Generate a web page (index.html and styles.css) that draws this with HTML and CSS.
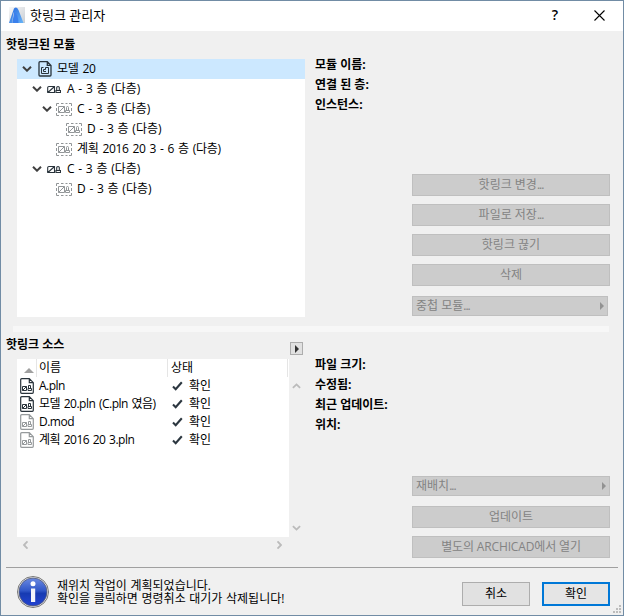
FILE: index.html
```html
<!DOCTYPE html>
<html lang="ko">
<head>
<meta charset="utf-8">
<title>핫링크 관리자</title>
<link rel="stylesheet" href="styles.css">
</head>
<body>
<svg class="defs" width="0" height="0">
  <defs>
    <linearGradient id="logoBlue" x1="0" x2="1" y1="0" y2="1"><stop offset="0" stop-color="#2367df"/><stop offset="1" stop-color="#69b5f7"/></linearGradient>
    <linearGradient id="logoBg" x1="0" x2="1" y1="0" y2="1"><stop offset="0" stop-color="#f8f8f8"/><stop offset="1" stop-color="#c9ced4"/></linearGradient>
    <linearGradient id="infoBlue" x1="0" x2="0" y1="0" y2="1"><stop offset="0" stop-color="#6b8ae2"/><stop offset=".45" stop-color="#3157c8"/><stop offset=".55" stop-color="#173bb2"/><stop offset="1" stop-color="#2343d2"/></linearGradient>
    <symbol id="chevron" viewBox="0 0 10 6"><path d="M1 .8 5 4.700 9 .8" fill="none" stroke="currentColor" stroke-width="2"/></symbol>
    <symbol id="plan" viewBox="0 0 14 16"><path d="M2 .7h7.300l3.700 3.700V14q0 1-1 1H2q-1 0-1-1V1.700q0-1 1-1zM9.300.7v3.700H13" fill="none" stroke="currentColor" stroke-width="1.300"/><path d="M5.500 6.500h-2v6h7v-6h-3M7.500 6.500v2h-2v2H8" fill="none" stroke="currentColor"/></symbol>
    <symbol id="file" viewBox="0 0 14 16"><path d="M1.700.7h7.600l4 4v9.600q0 1-1 1H1.700q-1 0-1-1V1.700q0-1 1-1zM9.300.7v4h4" fill="none" stroke="currentColor" stroke-width="1.200"/><path d="M2.500 8.500h4v4h-4zM2.500 12.500l4-4M8.500 10.500v-3h2v3M8 10.500h3.500v2H8z" fill="none" stroke="currentColor"/></symbol>
    <symbol id="module" viewBox="0 0 14 9"><path d="M1.300 1.500h6.200v6H.7V2.500q0-1 1-1M.9 7.500l6.600-6M9 7.500h4.500v-2H9zM9.700 5.500v-3q0-1 1.300-1t1.300 1v3" fill="none" stroke="currentColor" stroke-width="1.100"/></symbol>
    <symbol id="nested" viewBox="0 0 16 13"><path d="M.5 3V.5H3M5 .5h2.500m2 0h2M13 .5h2.500V3m0 2v3m0 2v2.500H13m-1.500 0h-2m-2 0H5m-2 0H.5V10m0-2V5" fill="none" stroke="currentColor"/><path d="M2.500 3.500h6v6h-6zM2.500 9.500l6-6M9.500 9.500h4v-2h-4zM10.500 7.500v-3q0-1 1-1t1 1v3" fill="none" stroke="currentColor"/></symbol>
    <symbol id="check" viewBox="0 0 11 10"><path d="M1 5.500l2.700 2.700L9.800 1.300" fill="none" stroke="#2c3740" stroke-width="2.100"/></symbol>
  </defs>
</svg>
<div class="dialog">
  <header class="titlebar">
    <svg class="logo" viewBox="0 0 16 16"><path d="M0 0h16v16H0z" fill="url(#logoBg)"/><path d="M0 16 5 1.500Q6 .4 7 .4q1.600 0 2.500 2.600L14.500 16H9Q8 6 5 5 3.500 8 3.500 16z" fill="url(#logoBlue)"/><path d="M5 4.500Q9 6 9.500 16H3.500z" fill="#3b80ec"/></svg>
    <h1>핫링크 관리자</h1>
    <span class="help">?</span>
    <svg class="close" viewBox="0 0 11 11"><path d="M.5.5l10 10M10.500.5l-10 10" stroke="#000" stroke-width="1.100"/></svg>
  </header>

  <section class="panel modules">
    <div class="left">
      <div class="heading"><h2>핫링크된 모듈</h2></div>
      <ul class="tree">
        <li class="selected"><svg class="chev"><use href="#chevron"/></svg><svg class="i-plan"><use href="#plan"/></svg><span class="num">모델 20</span></li>
        <li class="l1"><svg class="chev"><use href="#chevron"/></svg><svg class="i-mod"><use href="#module"/></svg><span>A - 3 층 (다층)</span></li>
        <li class="l2"><svg class="chev"><use href="#chevron"/></svg><svg class="i-nest"><use href="#nested"/></svg><span>C - 3 층 (다층)</span></li>
        <li class="l3"><i class="chev"></i><svg class="i-nest"><use href="#nested"/></svg><span>D - 3 층 (다층)</span></li>
        <li class="l2"><i class="chev"></i><svg class="i-nest"><use href="#nested"/></svg><span class="num">계획 2016 20 3 - 6 층 (다층)</span></li>
        <li class="l1"><svg class="chev"><use href="#chevron"/></svg><svg class="i-mod"><use href="#module"/></svg><span>C - 3 층 (다층)</span></li>
        <li class="l2"><i class="chev"></i><svg class="i-nest"><use href="#nested"/></svg><span>D - 3 층 (다층)</span></li>
      </ul>
    </div>
    <div class="right">
      <dl><dt>모듈 이름:</dt><dt>연결 된 층:</dt><dt>인스턴스:</dt></dl>
      <div class="actions">
        <button disabled>핫링크 변경<span class="dots">...</span></button>
        <button disabled>파일로 저장<span class="dots">...</span></button>
        <button disabled>핫링크 끊기</button>
        <button disabled>삭제</button>
        <button disabled class="popup narrow"><span>중첩 모듈<span class="dots">...</span></span><i class="arrow"></i></button>
      </div>
    </div>
  </section>

  <div class="splitter"></div>

  <section class="panel sources">
    <div class="left">
      <div class="heading"><h2>핫링크 소스</h2><button class="expand"><i class="arrow"></i></button></div>
      <div class="listwrap">
        <div class="list">
          <div class="row head"><span class="sort"><i></i></span><span class="name">이름</span><span class="state">상태</span></div>
          <div class="row"><svg class="file"><use href="#file"/></svg><span class="name">A.pln</span><svg class="check"><use href="#check"/></svg><span>확인</span></div>
          <div class="row"><svg class="file"><use href="#file"/></svg><span class="name">모델 20.pln (C.pln 였음)</span><svg class="check"><use href="#check"/></svg><span>확인</span></div>
          <div class="row"><svg class="file dim"><use href="#file"/></svg><span class="name">D.mod</span><svg class="check"><use href="#check"/></svg><span>확인</span></div>
          <div class="row"><svg class="file dim"><use href="#file"/></svg><span class="name">계획 2016 20 3.pln</span><svg class="check"><use href="#check"/></svg><span>확인</span></div>
        </div>
        <div class="vscroll"><svg class="sc up"><use href="#chevron"/></svg><svg class="sc"><use href="#chevron"/></svg></div>
        <div class="hscroll"><svg class="sc west"><use href="#chevron"/></svg><svg class="sc east"><use href="#chevron"/></svg></div>
      </div>
    </div>
    <div class="right">
      <dl><dt>파일 크기:</dt><dt>수정됨:</dt><dt>최근 업데이트:</dt><dt>위치:</dt></dl>
      <div class="actions">
        <button disabled class="popup"><span>재배치<span class="dots">...</span></span><i class="arrow"></i></button>
        <button disabled>업데이트</button>
        <button disabled class="open">별도의 ARCHICAD에서 열기</button>
      </div>
    </div>
  </section>

  <footer>
    <svg class="info" viewBox="0 0 32 32"><circle cx="16" cy="16" r="15.500" fill="#eee" stroke="#777"/><circle cx="16" cy="16" r="14" fill="url(#infoBlue)" stroke="#555c77" stroke-width=".8"/><circle cx="16" cy="7.800" r="2.500" fill="#fff"/><path d="M14 12.500h4.200V26H14z" fill="#f3f5fa"/></svg>
    <div class="message"><p>재위치 작업이 계획되었습니다.</p><p>확인을 클릭하면 명령취소 대기가 삭제됩니다!</p></div>
    <button class="cancel">취소</button>
    <button class="ok">확인</button>
    <svg class="grip" viewBox="0 0 8 8"><path d="M6 0h2v2H6zM3 3h2v2H3zM6 3h2v2H6zM0 6h2v2H0zM3 6h2v2H3zM6 6h2v2H6z" fill="#bcbcbc"/></svg>
  </footer>
</div>
</body>
</html>
```
FILE: styles.css
```css
* { box-sizing: border-box; }
body, h1, h2, ul, dl, p { margin: 0; padding: 0; }
body {
  font: 12px/20px "Open Sans", "Noto Sans CJK KR", sans-serif;
  color: #000;
}
svg { display: block; flex: none; }
.defs { position: absolute; }
h1, h2 { font-size: inherit; }
button { font: inherit; color: inherit; padding: 0; border-radius: 0; }
.dialog {
  width: 624px;
  height: 616px;
  border: 1px solid #718ca5;
  background: #f0f0f0;
  display: flex;
  flex-direction: column;
  white-space: nowrap;
}
.titlebar {
  height: 30px;
  flex: none;
  background: #fff;
  display: flex;
  align-items: center;
  padding: 0 18px 2px 8px;
}
.logo { width: 16px; height: 16px; }
h1 { flex: 1; margin-left: 5px; font-size: 13px; font-weight: 400; }
.help { font-size: 14px; font-weight: 600; margin-right: 36px; }
.close { width: 11px; height: 11px; }

.panel { display: flex; padding-left: 5px; flex: none; }
.left { width: 309px; }
.right { flex: 1; display: flex; flex-direction: column; }
.modules { height: 295px; }
.heading { height: 28px; display: flex; padding-top: 4px; }
h2, dt { font-weight: 700; font-size: 12px; }
.tree {
  list-style: none;
  width: 288px;
  height: 258px;
  margin-left: 11px;
  background: #fff;
}
.tree li { height: 20px; display: flex; align-items: center; padding-left: 5px; }
.tree span { word-spacing: .6px; }
.tree .num { letter-spacing: -.3px; word-spacing: 1.1px; }
.tree .selected { background: #cce8ff; }
.tree .l1 { padding-left: 15px; }
.tree .l2 { padding-left: 25px; }
.tree .l3 { padding-left: 35px; }
.chev { width: 10px; height: 6px; color: #404040; }
.i-plan { width: 14px; height: 16px; margin: 0 5px 0 6px; color: #29333b; }
.i-mod { width: 14px; height: 9px; margin: 0 6px 0 5px; color: #29333b; }
.i-nest { width: 16px; height: 13px; margin: 0 5px 0 4px; color: #929698; }

dl { padding-top: 24px; }
.actions {
  margin: auto 13px 0 97px;
  display: flex;
  flex-direction: column;
  gap: 8px;
}
.actions button {
  height: 22px;
  border: 1px solid #bfbfbf;
  background: #ccc;
  color: #838383;
  line-height: 18px;
  padding-bottom: 1px;
}
.actions .open { letter-spacing: -.15px; }
.dots { letter-spacing: -1px; }
.modules .actions { padding-bottom: 10px; }
.actions .popup {
  height: 20px;
  display: flex;
  align-items: center;
  justify-content: space-between;
  padding: 0 3px 1px 3px;
}
.narrow { width: 196px; margin-top: 2px; }
.arrow {
  width: 0;
  height: 0;
  border: solid transparent;
  border-width: 4px 0 4px 4px;
  border-left-color: #929292;
}
.popup .arrow { margin-top: 1px; }
.splitter { height: 6px; margin: 0 14px 0 12px; background: #f7f7f7; flex: none; }

.sources { height: 235px; }
.sources .heading { height: 27px; padding-top: 3px; }
.expand {
  width: 13px;
  height: 13px;
  margin: 7px 12px 0 auto;
  border: 1px solid #adadad;
  background: #e1e1e1;
  display: flex;
  align-items: center;
  justify-content: center;
}
.expand .arrow { border-left-color: #333; }
.listwrap {
  display: grid;
  grid-template: 178px 16px / 272px 15px;
  margin-left: 11px;
}
.list { background: #fff; }
.row { height: 18px; line-height: 18px; display: flex; padding-left: 3px; }
.row .name {
  width: 143px;
  margin: 0 -10px 0 5px;
  letter-spacing: -.5px;
  word-spacing: 1px;
}
.file { width: 14px; height: 16px; margin-top: 1px; color: #29333b; }
.file.dim { color: #969a9c; }
.check { width: 11px; height: 10px; margin: 4px 6px 0 0; }
.row.head { padding: 0; border-right: 1px solid #e5e5e5; width: 271px; line-height: 17px; }
.sort { width: 20px; border-right: 1px solid #e5e5e5; padding: 9px 0 0 7px; }
.sort i {
  display: block;
  width: 10px;
  border: solid transparent;
  border-width: 0 5px 5px;
  border-bottom-color: #a0a0a0;
}
.row.head .name { width: 129px; margin: 0; padding-left: 2px; letter-spacing: 0; }
.head .state { border-left: 1px solid #e5e5e5; padding-left: 3px; margin-left: 1px; }
.sc { width: 9px; height: 6px; color: #bbb; }
.vscroll {
  display: flex;
  flex-direction: column;
  justify-content: space-between;
  align-items: center;
  padding: 24px 0 6px;
}
.up { transform: rotate(180deg); }
.hscroll { display: flex; justify-content: space-between; align-items: center; padding: 0 5px 0 4px; }
.west { transform: rotate(90deg); }
.east { transform: rotate(-90deg); }
.sources dl { padding-top: 23px; }
.sources .actions { padding-bottom: 9px; }
.sources .popup { margin-bottom: 2px; }

footer {
  flex: 1;
  margin: 0 5px;
  border-top: 1px solid #a0a0a0;
  display: flex;
  align-items: flex-start;
  position: relative;
}
.info { width: 32px; height: 32px; margin: 8px 8px 0 11px; }
.message { flex: 1; line-height: 13px; padding-top: 11px; word-spacing: .5px; }
footer button { width: 68px; height: 24px; margin-top: 14px; line-height: 18px; padding-bottom: 1px; }
.cancel { border: 1px solid #adadad; background: #e1e1e1; margin-right: 12px; }
.ok { border: 2px solid #0078d7; background: #e5e5e5; margin-right: 8px; }
.grip { position: absolute; right: -3px; bottom: 2px; width: 8px; height: 8px; }
```
